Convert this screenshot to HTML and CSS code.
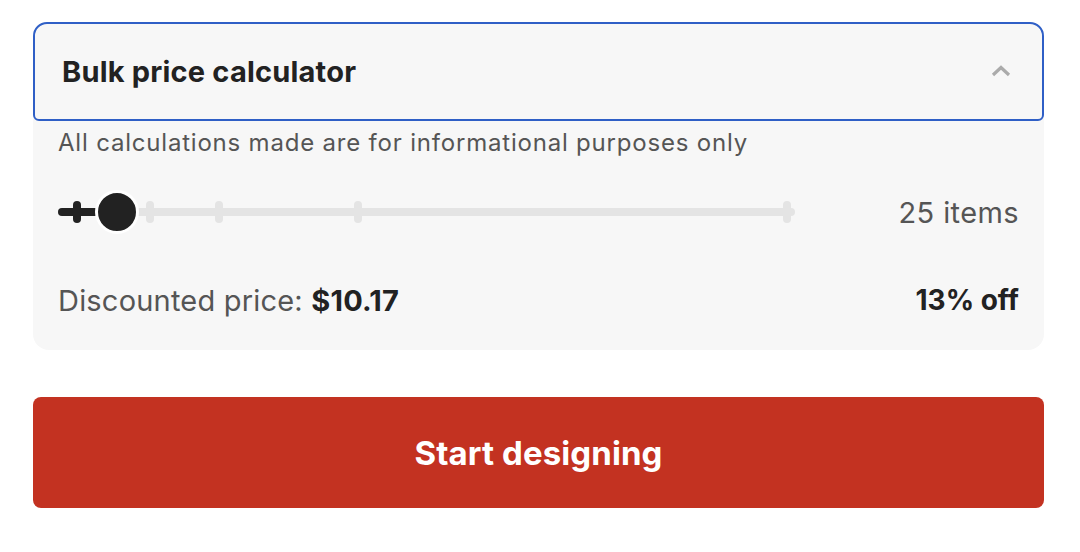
FILE: index.html
```html
<!DOCTYPE html>
<html lang="en">
  <head>
    <meta charset="UTF-8" />
    <meta name="viewport" content="width=device-width, initial-scale=1.0" />
    <title>Bulk price calculator</title>
    <link rel="stylesheet" href="styles.css">
  </head>
  <body>
    <div class="panel">
      <div class="calc">
        <button class="calc-header">
          <span class="calc-title">Bulk price calculator</span>
          <svg class="chevron" width="20" height="12" viewBox="0 0 20 12">
            <path d="M2 10 L10 2.5 L18 10" fill="none" stroke="#ababab" stroke-width="3.2" />
          </svg>
        </button>
        <div class="calc-body">
          <p class="note">All calculations made are for informational purposes only</p>
          <div class="slider-row">
            <div class="slider">
              <div class="track"></div>
              <div class="track-fill"></div>
              <span class="tick dark" style="left: 19px"></span>
              <span class="tick" style="left: 92px"></span>
              <span class="tick" style="left: 161px"></span>
              <span class="tick" style="left: 300px"></span>
              <span class="tick" style="left: 729px"></span>
              <span class="thumb" style="left: 59px"></span>
            </div>
            <span class="qty">25 items</span>
          </div>
          <div class="price-row">
            <span class="price">Discounted price: <b>$10.17</b></span>
            <span class="off">13% off</span>
          </div>
        </div>
      </div>
      <button class="start-btn">Start designing</button>
    </div>
  </body>
</html>
```

FILE: styles.css
```css
* {
  margin: 0;
  padding: 0;
  box-sizing: border-box;
  font-family: 'Inter', 'Liberation Sans', sans-serif;
}

body {
  background: #fff;
  color: #222;
}

.panel {
  width: 1011px;
  margin: 22px 0 0 33px;
  display: flex;
  flex-direction: column;
  gap: 47px;
}

.calc {
  background: #f7f7f7;
  border-radius: 16px;
}

.calc-header {
  width: 100%;
  height: 99px;
  display: flex;
  align-items: center;
  justify-content: space-between;
  padding: 0 31px 0 27px;
  background: #f7f7f7;
  border: 2px solid #2f5fc6;
  border-radius: 14px 14px 6px 6px;
  cursor: pointer;
}

.calc-title {
  font-size: 29px;
  font-weight: 700;
  color: #222;
  letter-spacing: 0.2px;
}

.chevron {
  margin-top: -2px;
}

.calc-body {
  padding: 6px 25px 30px 25px;
}

.note {
  font-size: 24px;
  color: #555;
  line-height: 32px;
  letter-spacing: 0.8px;
}

.slider-row {
  display: flex;
  align-items: center;
  justify-content: space-between;
  height: 50px;
  margin-top: 28px;
}

.slider {
  position: relative;
  width: 737px;
  height: 46px;
}

.track {
  position: absolute;
  left: 0;
  right: 0;
  top: 19px;
  height: 8px;
  border-radius: 4px;
  background: #e4e4e4;
}

.track-fill {
  position: absolute;
  left: 0;
  width: 60px;
  top: 19px;
  height: 8px;
  border-radius: 4px;
  background: #222;
}

.tick {
  position: absolute;
  top: 12px;
  width: 8px;
  height: 22px;
  margin-left: -4px;
  border-radius: 4px;
  background: #e4e4e4;
}

.tick.dark {
  background: #222;
}

.thumb {
  position: absolute;
  top: 1px;
  width: 44px;
  height: 44px;
  margin-left: -22px;
  border-radius: 50%;
  background: #222;
  border: 3px solid #fff;
}

.qty {
  font-size: 29px;
  color: #555;
  letter-spacing: 0.4px;
}

.price-row {
  display: flex;
  justify-content: space-between;
  align-items: center;
  height: 40px;
  margin-top: 43px;
  font-size: 29px;
  color: #555;
}

.price {
  letter-spacing: 0.2px;
}

.price b,
.off {
  font-weight: 700;
  color: #222;
}

.off {
  font-size: 28px;
}

.start-btn {
  height: 111px;
  border: none;
  border-radius: 8px;
  background: #c33221;
  color: #fff;
  font-size: 33px;
  font-weight: 700;
  letter-spacing: 0.1px;
  cursor: pointer;
}
```
